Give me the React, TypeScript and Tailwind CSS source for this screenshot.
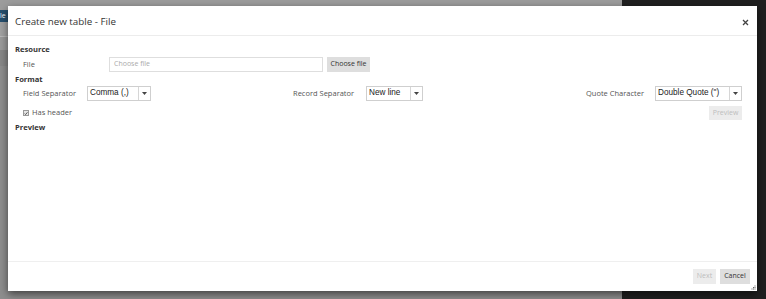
import React from "react";

const Select = ({ value, width }: { value: string; width: string }) => (
  <div className={`flex h-[15px] ${width} items-stretch border border-[#cfcfcf] bg-white`}>
    <div className="flex flex-1 items-center pl-[2px] text-[8.2px] text-[#222]" style={{ fontFamily: '"Liberation Sans", Arial, sans-serif' }}>
      {value}
    </div>
    <div className="flex w-[12px] items-center justify-center border-l border-[#d6d6d6]">
      <svg width="5" height="3" viewBox="0 0 5 3">
        <path d="M0 0 L5 0 L2.5 3 Z" fill="#444" />
      </svg>
    </div>
  </div>
);

export default function App() {
  return (
    <div
      className="relative h-[299px] w-[766px] overflow-hidden"
      style={{ fontFamily: '"Open Sans", "Noto Sans", sans-serif' }}
    >
      {/* backdrop page */}
      <div className="flex h-full w-full">
        <div className="flex w-[622px] flex-col bg-[#8d8d8d]">
          <div className="h-[10px] bg-[#9c9c9c]" />
          <div className="flex h-[12px] items-center overflow-hidden bg-[#27506f] text-[7px] text-white">
            <span className="pl-[0px]">le</span>
          </div>
          <div className="h-[14px] bg-[#a2a2a2]" />
          <div className="h-[1px] bg-[#b8b8b8]" />
          <div className="h-[13px] bg-[#9a9a9a]" />
          <div className="h-[16px] bg-[#878787]" />
          <div className="flex-1 bg-[#8e8e8e]" />
        </div>
        <div className="flex-1 bg-[#202020]" />
      </div>

      {/* modal */}
      <div className="absolute left-[8px] top-[6px] flex h-[285px] w-[749px] flex-col bg-white shadow-[0_3px_8px_rgba(0,0,0,0.55)]">
        <div className="flex h-[30px] items-center justify-between border-b border-[#ececec] pl-[7px] pr-[8px] pt-[3px]">
          <span className="text-[9.8px] text-[#333]">Create new table - File</span>
          <svg width="7" height="7" viewBox="0 0 7 7">
            <path d="M1 1 L6 6 M6 1 L1 6" stroke="#444" strokeWidth="1.3" />
          </svg>
        </div>

        <div className="flex flex-1 flex-col pl-[7px] pr-[15px] pt-[9px]">
          <div className="flex h-[10px] items-center text-[7.6px] font-bold text-[#333]">Resource</div>
          <div className="mt-[2px] flex h-[15px] items-center pl-[8px]">
            <span className="w-[86px] text-[7.5px] text-[#555]">File</span>
            <div className="flex h-[15px] w-[214px] items-center border border-[#dedede] pl-[4px] text-[7px] text-[#aaa]">
              Choose file
            </div>
            <div className="ml-[4px] flex h-[15px] w-[43px] items-center justify-center bg-[#dedede] text-[7px] text-[#333]">
              Choose file
            </div>
          </div>

          <div className="mt-[3px] flex h-[10px] items-center text-[7.6px] font-bold text-[#333]">Format</div>
          <div className="mt-[1px] flex h-[15px] items-center pl-[8px]">
            <span className="w-[64px] text-[7.5px] text-[#555]">Field Separator</span>
            <Select value="Comma (,)" width="w-[64px]" />
            <span className="ml-[142px] w-[73px] text-[7.5px] text-[#555]">Record Separator</span>
            <Select value="New line" width="w-[57px]" />
            <span className="ml-auto w-[69px] text-[7.5px] text-[#555]">Quote Character</span>
            <Select value={'Double Quote (")'} width="w-[87px]" />
          </div>

          <div className="mt-[5px] flex h-[14px] items-center pl-[8px]">
            <span className="flex h-[6px] w-[6px] items-center justify-center border border-[#999] bg-[#e6e6e6]">
              <svg width="5" height="5" viewBox="0 0 5 5">
                <path d="M0.8 2.6 L2 3.8 L4.3 1" stroke="#333" strokeWidth="1" fill="none" />
              </svg>
            </span>
            <span className="ml-[3px] text-[7.5px] text-[#555]">Has header</span>
            <div className="ml-auto flex h-[14px] w-[33px] items-center justify-center bg-[#ececec] text-[7px] text-[#bdbdbd]">
              Preview
            </div>
          </div>

          <div className="mt-[3px] flex h-[10px] items-center text-[7.6px] font-bold text-[#333]">Preview</div>
        </div>

        <div className="relative flex h-[30px] items-center justify-end gap-[4px] border-t border-[#efefef] pr-[7px]">
          <div className="flex h-[15px] w-[23px] items-center justify-center bg-[#ececec] text-[7px] text-[#bdbdbd]">
            Next
          </div>
          <div className="flex h-[15px] w-[30px] items-center justify-center bg-[#dedede] text-[7px] text-[#333]">
            Cancel
          </div>
          <svg className="absolute bottom-[1px] right-[1px]" width="5" height="5" viewBox="0 0 5 5">
            <rect x="3.5" y="0.5" width="1" height="1" fill="#666" />
            <rect x="2" y="2" width="1" height="1" fill="#666" />
            <rect x="3.5" y="2" width="1" height="1" fill="#666" />
            <rect x="0.5" y="3.5" width="1" height="1" fill="#666" />
            <rect x="2" y="3.5" width="1" height="1" fill="#666" />
            <rect x="3.5" y="3.5" width="1" height="1" fill="#666" />
          </svg>
        </div>
      </div>
    </div>
  );
}
